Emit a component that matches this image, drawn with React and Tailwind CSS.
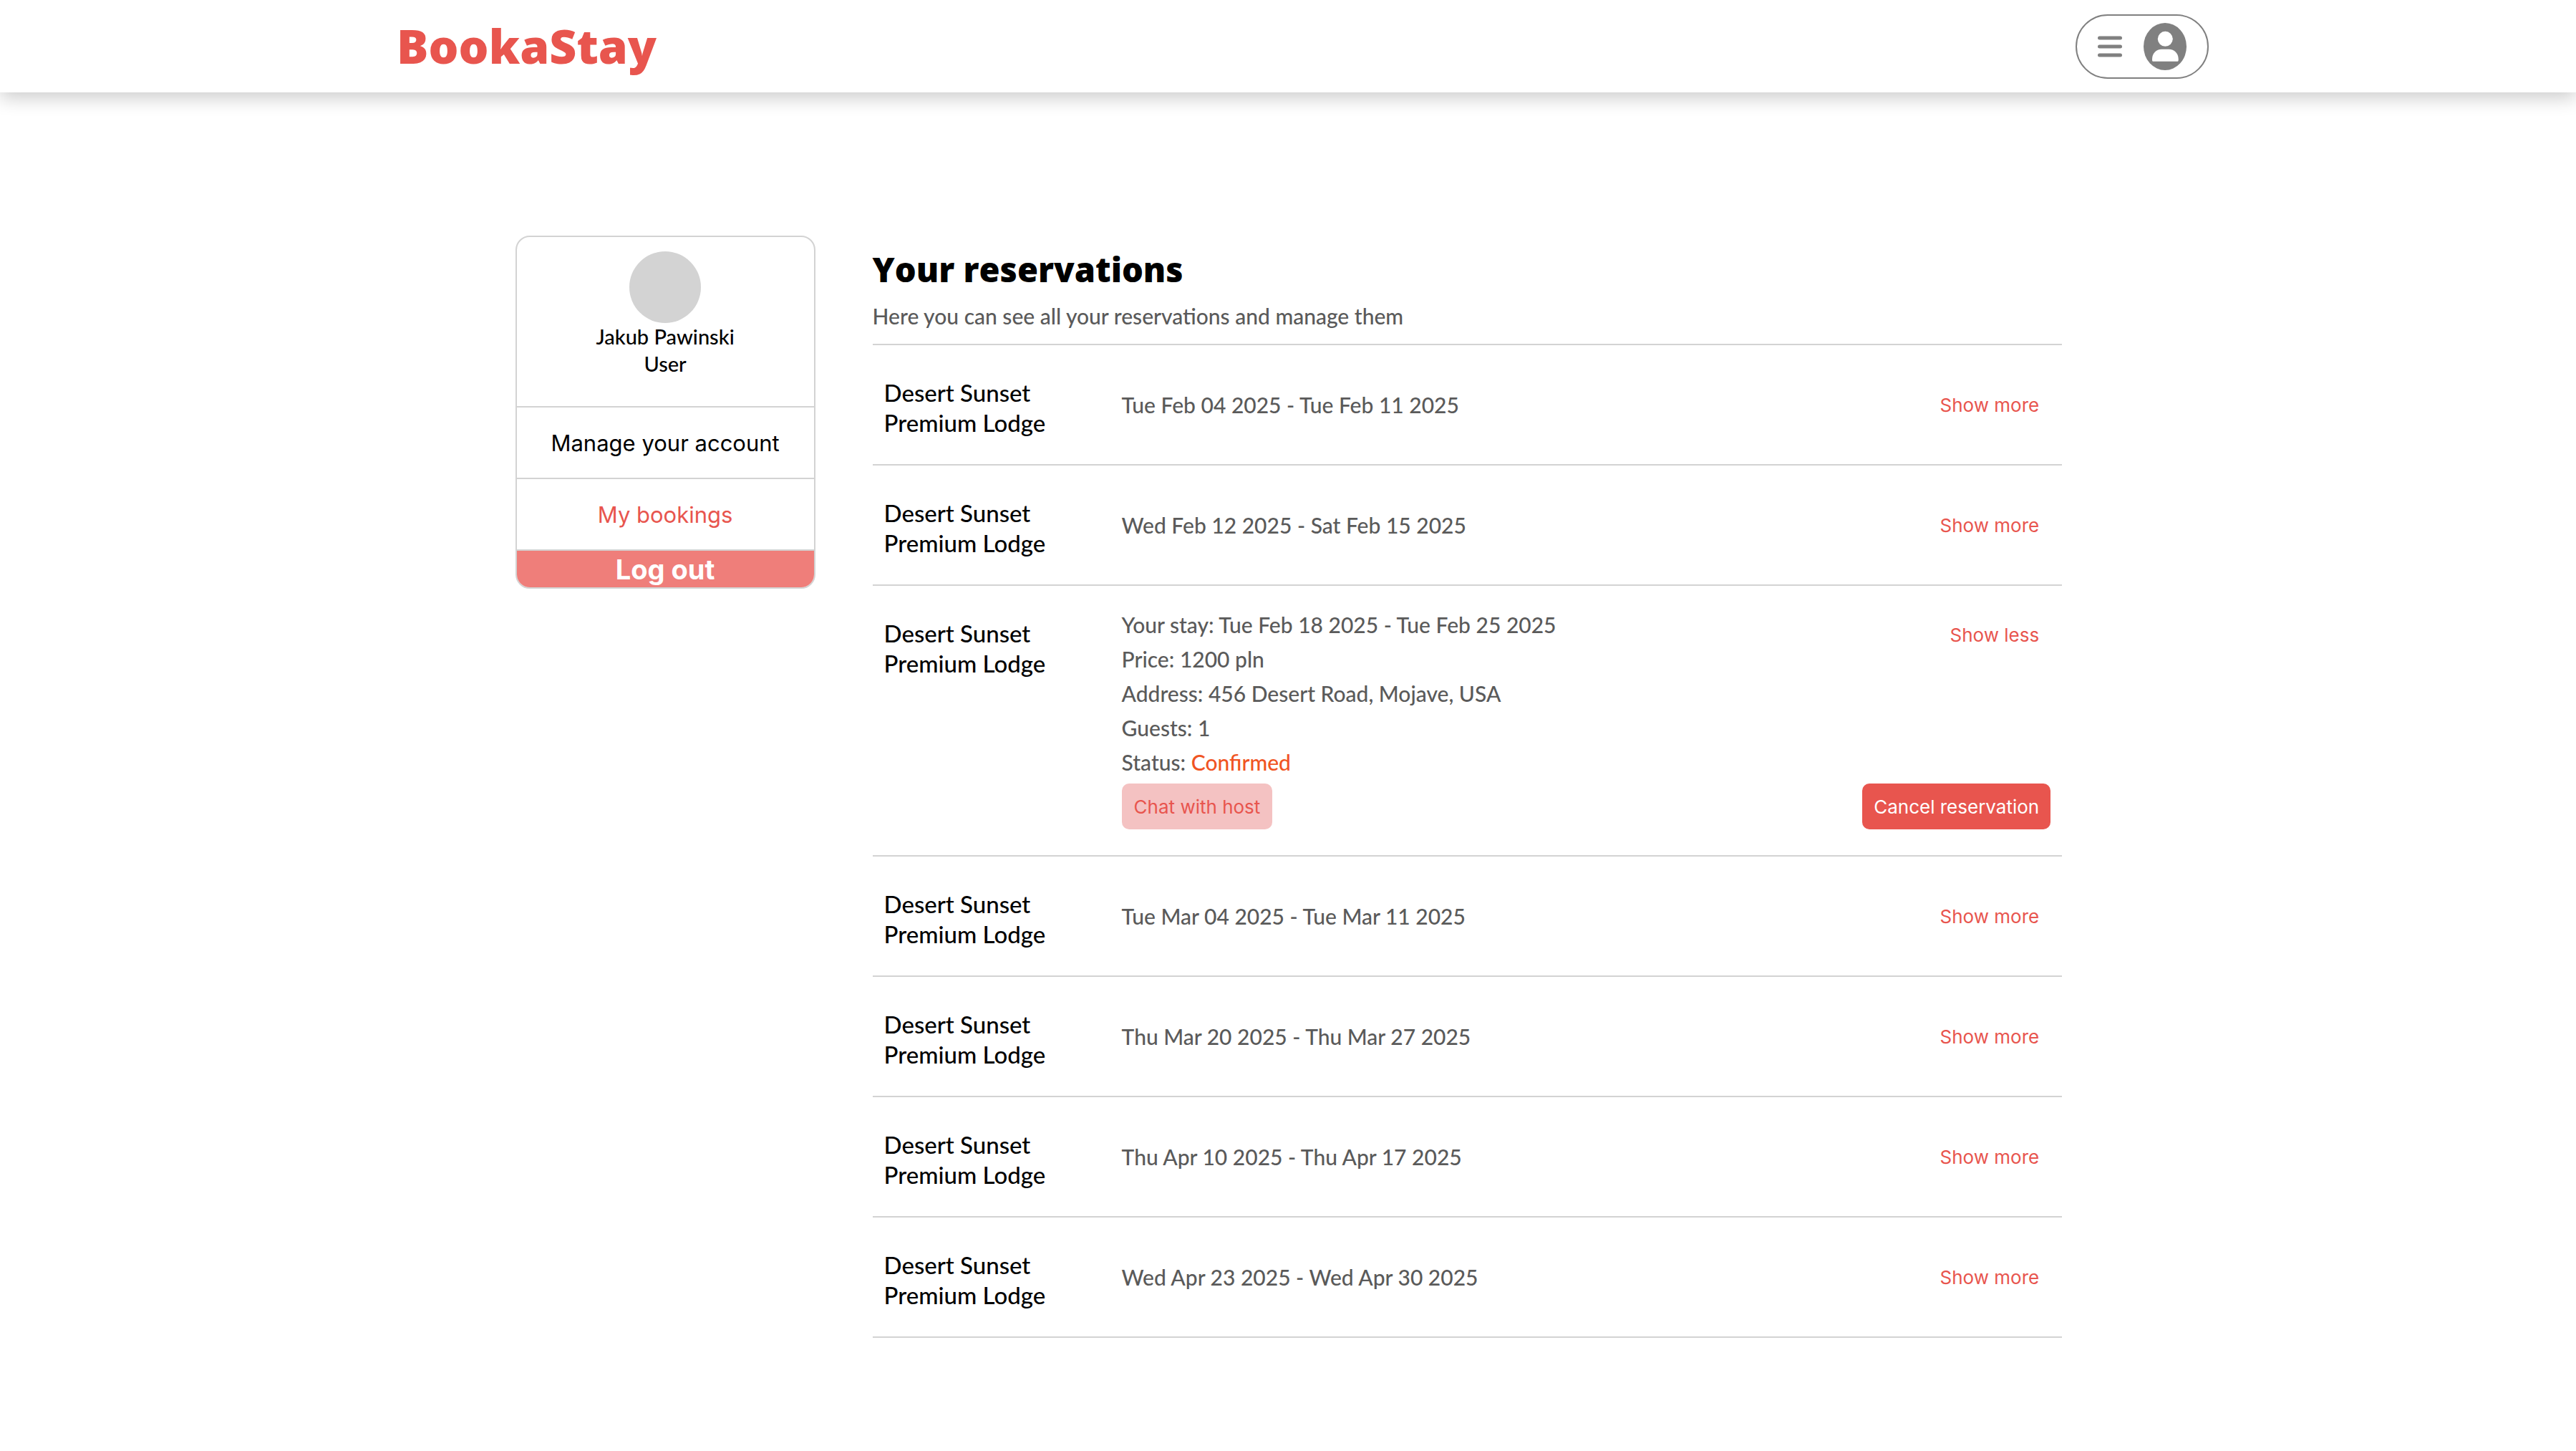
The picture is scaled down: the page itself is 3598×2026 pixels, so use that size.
import { useState } from "react";

const RESERVATIONS = [
  { id: 1, from: "Tue Feb 04 2025", to: "Tue Feb 11 2025" },
  { id: 2, from: "Wed Feb 12 2025", to: "Sat Feb 15 2025" },
  { id: 3, from: "Tue Feb 18 2025", to: "Tue Feb 25 2025" },
  { id: 4, from: "Tue Mar 04 2025", to: "Tue Mar 11 2025" },
  { id: 5, from: "Thu Mar 20 2025", to: "Thu Mar 27 2025" },
  { id: 6, from: "Thu Apr 10 2025", to: "Thu Apr 17 2025" },
  { id: 7, from: "Wed Apr 23 2025", to: "Wed Apr 30 2025" },
];

function MenuIcon() {
  return (
    <svg className="h-[30px] w-[34px]" viewBox="0 0 34 30" fill="none" stroke="#808080" strokeWidth="5" strokeLinecap="round" aria-hidden="true">
      <path d="M2.5 3h29M2.5 15h29M2.5 27h29" />
    </svg>
  );
}

function UserIcon() {
  return (
    <svg className="h-[66px] w-[60px]" viewBox="0 0 60 66" aria-hidden="true">
      <ellipse cx="30" cy="33" rx="30" ry="33" fill="#808080" />
      <circle cx="30.3" cy="22.3" r="10.5" fill="#fff" />
      <path d="M12 50.5C12 42.5 17.5 36.7 25.5 36.7h9.6c8 0 13.6 5.8 13.6 13.8v1.4c0 1.2-.7 1.9-1.9 1.9H13.900c-1.200 0-1.900-.7-1.900-1.900z" fill="#fff" />
    </svg>
  );
}

function Header() {
  return (
    <header className="flex h-[129px] items-center justify-between bg-white pl-[15.4%] pr-[14.25%] pb-1 shadow-[0_8px_24px_rgba(0,0,0,0.2)]">
      <a href="#" className="font-['Open_Sans',sans-serif] text-[66px] leading-[80px] font-extrabold text-[#e8554e]">
        BookaStay
      </a>
      <button type="button" aria-label="Open user menu" className="mt-1 flex h-[90px] items-center gap-[30px] rounded-full border-2 border-[#808080] px-[29px]">
        <MenuIcon />
        <UserIcon />
      </button>
    </header>
  );
}

function Sidebar() {
  return (
    <aside className="w-[419px] shrink-0 overflow-hidden rounded-[20px] border-2 border-[#d3d3d3] text-center">
      <div className="flex flex-col items-center pt-5 pb-10 text-[29px] leading-[38px] font-medium">
        <div className="size-[100px] rounded-full bg-[#d3d3d3]" />
        <p>Jakub Pawinski</p>
        <p>User</p>
      </div>
      <nav className="font-['Inter',sans-serif] text-[31px] leading-[38px]">
        <a href="#" className="block border-t-2 border-[#d3d3d3] pt-[31px] pb-[29px]">Manage your account</a>
        <a href="#" aria-current="page" className="block border-y-2 border-[#d3d3d3] pt-[31px] pb-[29px] text-[#e8554e]">My bookings</a>
      </nav>
      <button type="button" className="block w-full bg-[#ef7e7a] pt-0.5 pb-px font-['Inter',sans-serif] text-[38px] leading-[48px] font-bold text-white">
        Log out
      </button>
    </aside>
  );
}

function Reservation({ from, to, open, onToggle }) {
  return (
    <li className="flex items-stretch border-b-2 border-[#d3d3d3] px-4">
      <h2 className="w-[332px] shrink-0 pt-[45px] pb-[37px] pr-20 text-[33px] leading-[42px] font-medium text-black">
        Desert Sunset Premium Lodge
      </h2>
      {open ? (
        <div className="flex-1 pt-[30px] pb-9">
          <p>Your stay: {from} - {to}</p>
          <p>Price: 1200 pln</p>
          <p>Address: 456 Desert Road, Mojave, USA</p>
          <p>Guests: 1</p>
          <p>Status: <span className="text-[#f05423]">Confirmed</span></p>
          <button type="button" className="mt-1.5 block h-16 rounded-[10px] bg-[#f4c2c2] px-[17px] pt-0.5 font-['Inter',sans-serif] text-[26px] leading-8 font-normal text-[#e8554e]">
            Chat with host
          </button>
        </div>
      ) : (
        <p className="flex-1 self-center">{from} - {to}</p>
      )}
      <div className={open ? "flex flex-col items-end justify-between pt-9 pb-9" : "flex items-center"}>
        <button type="button" onClick={onToggle} aria-expanded={open} className="h-16 px-4 pt-0.5 font-['Inter',sans-serif] text-[26px] leading-8 font-normal text-[#e8554e]">
          {open ? "Show less" : "Show more"}
        </button>
        {open && (
          <button type="button" className="h-16 rounded-[10px] bg-[#e8554e] px-4 pt-0.5 font-['Inter',sans-serif] text-[26px] leading-8 font-normal text-white">
            Cancel reservation
          </button>
        )}
      </div>
    </li>
  );
}

export default function App() {
  const [openId, setOpenId] = useState(3);
  return (
    <div className="min-h-screen bg-white font-['Lato',sans-serif] text-black">
      <Header />
      <main className="mt-[200px] ml-[20%] flex w-[60.05%] items-start gap-20">
        <Sidebar />
        <section className="min-w-0 flex-1 pt-3.5 text-[30px] leading-[48px] font-medium text-[#5a5a5a]">
          <h1 className="font-['Open_Sans',sans-serif] text-[47px] leading-[66px] font-extrabold text-black">Your reservations</h1>
          <p className="pt-2 pb-[15px]">Here you can see all your reservations and manage them</p>
          <ul className="border-t-2 border-[#d3d3d3]">
            {RESERVATIONS.map((r) => (
              <Reservation
                key={r.id}
                from={r.from}
                to={r.to}
                open={r.id === openId}
                onToggle={() => setOpenId(r.id === openId ? null : r.id)}
              />
            ))}
          </ul>
        </section>
      </main>
    </div>
  );
}
